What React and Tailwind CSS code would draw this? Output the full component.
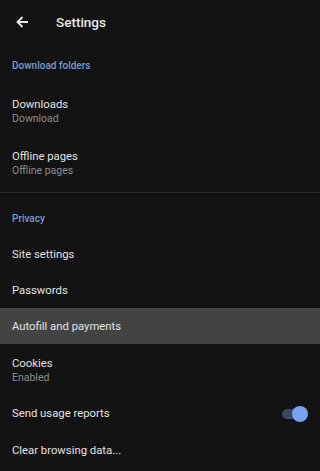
import React from "react";

const font = { fontFamily: "Roboto, 'Noto Sans', sans-serif" };

function Item({ title, sub, highlight }) {
  return (
    <div className={`flex flex-col justify-center px-3 ${highlight ? "bg-[#434343]" : ""} ${sub ? "h-[52px]" : "h-[36px]"}`}>
      <div className="text-[11.3px] leading-[15px] text-[#e2e2e2]">{title}</div>
      {sub && <div className="text-[10.5px] leading-[14px] text-[#8c8c8c]">{sub}</div>}
    </div>
  );
}

export default function App() {
  return (
    <div className="w-[320px] h-[471px] bg-[#131313] overflow-hidden" style={font}>
      <div className="h-[44px] flex items-center px-4">
        <svg width="13" height="12" viewBox="0 0 13 12" className="text-[#e8e8e8]">
          <path d="M12 6H1.5M6.5 1L1.5 6l5 5" fill="none" stroke="currentColor" strokeWidth="1.8" />
        </svg>
        <div className="ml-[27px] text-[13.5px] font-medium text-[#e8e8e8]">Settings</div>
      </div>
      <div className="h-[41px] flex items-center px-3 pt-[2px] text-[10px] font-medium text-[#7b9ad0]">Download folders</div>
      <Item title="Downloads" sub="Download" />
      <Item title="Offline pages" sub="Offline pages" />
      <div className="h-[1px] bg-[#2a2a2a] mt-[3px]" />
      <div className="h-[43px] px-3 pt-[20px] text-[10px] leading-[12px] font-medium text-[#7b9ad0]">Privacy</div>
      <Item title="Site settings" />
      <Item title="Passwords" />
      <Item title="Autofill and payments" highlight />
      <Item title="Cookies" sub="Enabled" />
      <div className="h-[36px] flex items-center justify-between px-3">
        <div className="text-[11.3px] text-[#e2e2e2]">Send usage reports</div>
        <div className="relative w-[26px] h-[16px] flex items-center">
          <div className="w-[22px] h-[10px] rounded-full bg-[#3a4860]" />
          <div className="absolute right-0 top-0 w-[16px] h-[16px] rounded-full bg-[#76a2f0]" />
        </div>
      </div>
      <Item title="Clear browsing data..." />
    </div>
  );
}
